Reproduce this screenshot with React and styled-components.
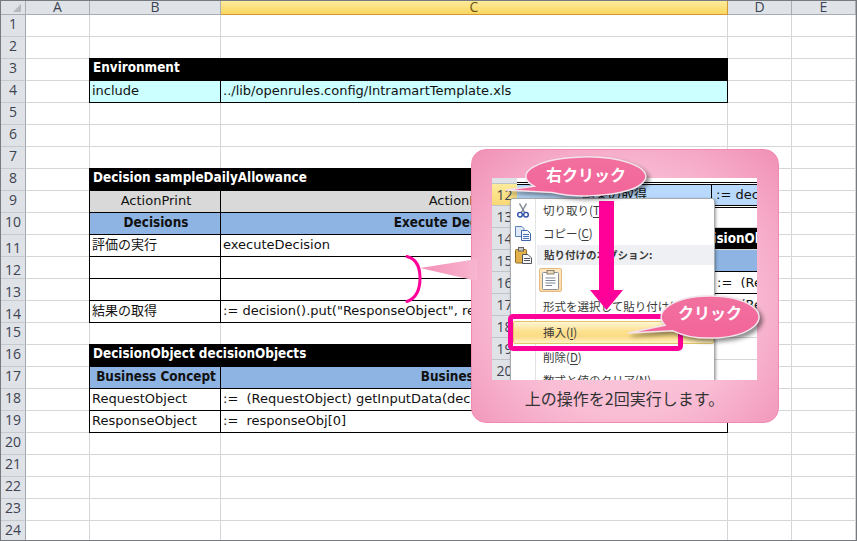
import React from "react";
import styled, { createGlobalStyle } from "styled-components";

const GlobalStyle = createGlobalStyle`
  html, body {
    margin: 0;
    padding: 0;
    background: #fff;
  }
`;

const CELL_FONT = `"DejaVu Sans", "Noto Sans CJK JP", sans-serif`;
const BOLD_FONT = `"DejaVu Sans Condensed", "DejaVu Sans", sans-serif`;
const UI_FONT = `"Open Sans", "Noto Sans CJK JP", sans-serif`;
const JP_FONT = `"Noto Sans CJK JP", "Open Sans", sans-serif`;
const PINK = "#ff0099";

const Page = styled.div`
  position: relative;
  box-sizing: border-box;
  width: 857px;
  height: 541px;
  overflow: hidden;
  border: 1px solid #777b80;
  background: #fff;
`;

const Sheet = styled.div`
  display: grid;
  grid-template-columns: 25px 64px 131px 507px 64px 64px;
  grid-template-rows: 14px repeat(24, 22px);
  font: 13px/1 ${CELL_FONT};
  color: #111;
`;

const Corner = styled.div`
  position: relative;
  background: #dfe2e7;
  border-right: 1px solid #a9adb3;
  border-bottom: 1px solid #a9adb3;

  &::after {
    content: "";
    position: absolute;
    right: 4px;
    bottom: 2px;
    border-style: solid;
    border-width: 0 0 8px 8px;
    border-color: transparent transparent #b5bac1 transparent;
  }
`;

const ColHead = styled.div`
  display: flex;
  align-items: center;
  justify-content: center;
  box-sizing: border-box;
  padding-bottom: 2px;
  font: 14px/1 ${UI_FONT};
  color: ${(p) => (p.$active ? "#6b5310" : "#3c4250")};
  background: ${(p) =>
    p.$active ? "linear-gradient(#fdeb9c, #f9d65f)" : "#dfe2e7"};
  border-right: 1px solid ${(p) => (p.$active ? "#d29a35" : "#a9adb3")};
  border-bottom: 1px solid ${(p) => (p.$active ? "#d29a35" : "#a9adb3")};
`;

const RowHead = styled.div`
  display: flex;
  align-items: center;
  justify-content: center;
  box-sizing: border-box;
  padding: ${(p) => (p.$low ? "4px 0 0" : "0 0 4px")};
  font: 14px/1 ${UI_FONT};
  color: #3c4250;
  background: #dfe2e7;
  border-right: 1px solid #a3a7ad;
  border-bottom: 1px solid #c6c9ce;
`;

const Blank = styled.div`
  box-sizing: border-box;
  border-right: 1px solid #d6d6d6;
  border-bottom: 1px solid #d6d6d6;
`;

const Title = styled.div`
  grid-column: span 2;
  display: flex;
  align-items: center;
  box-sizing: border-box;
  margin: -1px 0 0 -1px;
  padding: 0 0 3px 4px;
  font: bold 13.4px/1 ${BOLD_FONT};
  color: #fff;
  background: #000;
`;

const fills = { cyan: "#ccffff", grey: "#d9d9d9", blue: "#8db4e2", white: "#fff" };

const Cell = styled.div`
  display: flex;
  align-items: center;
  justify-content: ${(p) => (p.$center ? "center" : "flex-start")};
  box-sizing: border-box;
  margin-left: ${(p) => (p.$first ? "-1px" : "0")};
  padding: 0 0 2px 2px;
  white-space: pre;
  overflow: hidden;
  background: ${(p) => fills[p.$fill || "white"]};
  border-right: 1px solid #000;
  border-bottom: 1px solid #000;
  border-left: ${(p) => (p.$first ? "1px solid #000" : "0")};
`;

const HeadText = styled.span`
  font: bold 13.4px/1 ${BOLD_FONT};
  color: #111;
`;

const Callout = styled.div`
  position: absolute;
  left: 470px;
  top: 148px;
  box-sizing: border-box;
  width: 308px;
  height: 274px;
  padding: 28px 21px 0 20px;
  display: flex;
  flex-direction: column;
  border: 1px solid #f08ab0;
  border-radius: 15px;
  background: radial-gradient(ellipse at 50% 55%, #fcd0e1 0%, #f9bdd4 55%, #f190b5 100%);
`;

const Shot = styled.div`
  position: relative;
  z-index: 0;
  height: 202px;
  overflow: hidden;
  background: #fff;
  font: 13px/1 ${CELL_FONT};
  color: #111;
`;

const ShotRow = styled.div`
  display: grid;
  grid-template-columns: 25px 1fr;
  height: ${(p) => p.$h || 22}px;
`;

const ShotHead = styled.div`
  display: flex;
  align-items: center;
  justify-content: center;
  box-sizing: border-box;
  overflow: hidden;
  font: 14px/1 ${UI_FONT};
  color: #3c4250;
  background: ${(p) => (p.$active ? "linear-gradient(#fdeb9c, #f9d875)" : "#dfe2e7")};
  border-bottom: 1px solid #c0c3c8;
`;

const ShotBody = styled.div`
  display: flex;
  align-items: center;
  box-sizing: border-box;
  white-space: pre;
  overflow: hidden;
  padding-left: ${(p) => p.$pad || 0}px;
  border-bottom: 1px solid ${(p) => (p.$black ? "#000" : "#d6d6d6")};
  background: ${(p) => p.$bg || "#fff"};
  color: ${(p) => p.$color || "#111"};
  font: ${(p) => (p.$bold ? `bold 13.4px/1 ${BOLD_FONT}` : `13px/1 ${CELL_FONT}`)};
`;

const SelectedBody = styled.div`
  position: relative;
  z-index: 1;
  display: grid;
  grid-template-columns: 195px 1fr;
  align-items: center;
  box-sizing: border-box;
  white-space: pre;
  background: #b8d9fb;
  border-top: 1px solid #000;
  border-bottom: 1px solid #000;
  box-shadow: 0 -1px 0 #fff, 0 -2px 0 #000, 0 1px 0 #fff, 0 2px 0 #000;
`;

const SelectedText = styled.span`
  padding-left: ${(p) => p.$pad}px;
  height: 20px;
  line-height: 19px;
  border-right: ${(p) => (p.$divider ? "1px solid #000" : "0")};
`;

const Menu = styled.div`
  position: absolute;
  z-index: 2;
  left: 18px;
  top: 20px;
  box-sizing: border-box;
  width: 205px;
  height: 200px;
  border: 1px solid #a7abb0;
  border-radius: 3px;
  box-shadow: 1px 1px 3px rgba(0, 0, 0, 0.35);
  background: linear-gradient(to right, #fff 24px, #e2e3e3 24px, #e2e3e3 25px, #fff 25px);
  font: 11.5px/1 ${JP_FONT};
  color: #3b3b3b;
`;

const MenuItem = styled.div`
  display: flex;
  align-items: center;
  height: ${(p) => p.$h || 23}px;
  white-space: nowrap;
  overflow: hidden;
`;

const IconSlot = styled.span`
  display: flex;
  align-items: center;
  justify-content: center;
  flex: none;
  width: 24px;
  margin-right: ${(p) => p.$gap ?? 8}px;
`;

const MenuLabel = styled.span`
  u {
    text-underline-offset: 2px;
  }
`;

const MenuHeader = styled.div`
  flex: 1;
  display: flex;
  align-items: center;
  height: 100%;
  padding-left: 7px;
  background: #eff0f4;
  font-weight: bold;
  font-size: 10.5px;
`;

const PasteRow = styled.div`
  display: flex;
  align-items: center;
  height: 30px;
  padding-left: 28px;
`;

const PasteButton = styled.div`
  display: flex;
  align-items: center;
  justify-content: center;
  box-sizing: border-box;
  width: 23px;
  height: 24px;
  border: 1px solid #e5b981;
  border-radius: 2px;
  background: linear-gradient(#fde8c2, #fcd9a4);
`;

const HotItem = styled.div`
  display: flex;
  align-items: center;
  box-sizing: border-box;
  height: 23px;
  margin: 3px 0 2px 2px;
  padding-left: 29px;
  border: 1px solid #e3c56c;
  border-radius: 2px;
  background: linear-gradient(#fff6d4, #fde08c 45%, #fbdc88 70%, #fff3c6);
`;

const Frame = styled.div`
  position: absolute;
  z-index: 3;
  left: 16px;
  top: 136px;
  box-sizing: border-box;
  width: 175px;
  height: 37px;
  border: 5px solid ${PINK};
  border-radius: 5px;
`;

const Caption = styled.div`
  flex: 1;
  display: flex;
  align-items: center;
  justify-content: center;
  padding-bottom: 6px;
  font: 16px/1 ${JP_FONT};
  color: #333;
`;

const Drawing = styled.svg`
  position: absolute;
  left: ${(p) => p.$x}px;
  top: ${(p) => p.$y}px;
  overflow: visible;
  pointer-events: none;
`;

const BubbleShape = styled(Drawing)`
  filter: drop-shadow(3px 3px 2px rgba(0, 0, 0, 0.45));
`;

const BubbleText = styled.div`
  position: absolute;
  left: ${(p) => p.$x}px;
  top: ${(p) => p.$y}px;
  font: bold ${(p) => p.$size}px/1 ${JP_FONT};
  color: #fff;
  white-space: nowrap;
`;

const COLUMNS = ["A", "B", "C", "D", "E"];

// only the rows that hold a table, the rest are empty grid cells
const TABLE_ROWS = {
  3: { title: "Environment" },
  4: { b: "include", c: "../lib/openrules.config/IntramartTemplate.xls", fill: "cyan" },
  8: { title: "Decision sampleDailyAllowance" },
  9: { b: "ActionPrint", c: "ActionExecute", fill: "grey", center: true },
  10: { b: "Decisions", c: "Execute Decision Tables", fill: "blue", center: true, bold: true },
  11: { b: "評価の実行", c: "executeDecision" },
  12: { b: "", c: "" },
  13: { b: "", c: "" },
  14: { b: "結果の取得", c: ':= decision().put("ResponseObject", response)' },
  16: { title: "DecisionObject decisionObjects" },
  17: { b: "Business Concept", c: "Business Object", fill: "blue", center: true, bold: true },
  18: { b: "RequestObject", c: ":=  (RequestObject) getInputData(decision())" },
  19: { b: "ResponseObject", c: ":=  responseObj[0]" },
};

const LOW_LABELS = [11, 12, 13, 14];

const TableCells = ({ row }) => {
  if (row.title) return <Title>{row.title}</Title>;
  const Text = row.bold ? HeadText : "span";
  return (
    <>
      <Cell $first $fill={row.fill} $center={row.center}>
        <Text>{row.b}</Text>
      </Cell>
      <Cell $fill={row.fill} $center={row.center}>
        <Text>{row.c}</Text>
      </Cell>
    </>
  );
};

const SheetRow = ({ n }) => {
  const row = TABLE_ROWS[n];
  return (
    <>
      <RowHead $low={LOW_LABELS.includes(n)}>{n}</RowHead>
      <Blank />
      {row ? <TableCells row={row} /> : (
        <>
          <Blank />
          <Blank />
        </>
      )}
      <Blank />
      <Blank />
    </>
  );
};

const ScissorsIcon = () => (
  <svg width="12" height="15" viewBox="0 0 12 15">
    <path d="M2.5 0.5 L7.6 9.5 M9.5 0.5 L4.4 9.5" stroke="#7d8894" strokeWidth="1.5" fill="none" />
    <circle cx="3" cy="11.7" r="2.3" stroke="#2b4fa8" strokeWidth="1.4" fill="#fff" />
    <circle cx="9" cy="11.7" r="2.3" stroke="#2b4fa8" strokeWidth="1.4" fill="#fff" />
  </svg>
);

const CopyIcon = () => (
  <svg width="16" height="15" viewBox="0 0 16 15">
    <path d="M0.5 0.5 H7 L9 2.5 V10.5 H0.5 Z" fill="#dfe9f7" stroke="#5f82b8" />
    <path d="M6.5 4.5 H12.5 L15.5 7.5 V14.5 H6.5 Z" fill="#f3f7fd" stroke="#3f66a8" />
    <path d="M8 8.5 H14 M8 10.5 H14 M8 12.5 H14" stroke="#4a72b5" />
  </svg>
);

const ClipboardIcon = () => (
  <svg width="17" height="17" viewBox="0 0 17 17">
    <rect x="0.5" y="2.5" width="11" height="13.5" rx="1" fill="#e4b04a" stroke="#8c6a22" />
    <rect x="3.5" y="0.5" width="5" height="3.5" fill="#c8c9cb" stroke="#66625a" />
    <path d="M7.5 7.5 H13 L16.5 11 V16.5 H7.5 Z" fill="#f5f5f5" stroke="#50545c" />
    <path d="M9 11.5 H15 M9 13.5 H15" stroke="#50545c" />
  </svg>
);

const PasteIcon = () => (
  <svg width="17" height="20" viewBox="0 0 17 20">
    <rect x="0.5" y="2.5" width="16" height="17" rx="1" fill="#fff" stroke="#8b9097" />
    <rect x="5" y="0.5" width="7" height="3.5" fill="#e8d9b8" stroke="#8b8270" />
    <path d="M3.5 8 H13.5 M3.5 10.5 H13.5 M3.5 13 H13.5 M3.5 15.5 H10" stroke="#7b8797" />
  </svg>
);

const BubbleFill = ({ id }) => (
  <defs>
    <linearGradient id={id} x1="0" y1="0" x2="0" y2="1">
      <stop offset="0" stopColor="#f1709e" />
      <stop offset="1" stopColor="#f3659a" />
    </linearGradient>
  </defs>
);

const ShotSheet = () => (
  <>
    <ShotRow $h={6}>
      <ShotHead />
      <ShotBody />
    </ShotRow>
    <ShotRow>
      <ShotHead $active>12</ShotHead>
      <SelectedBody>
        <SelectedText $pad={65} $divider>結果の取得</SelectedText>
        <SelectedText $pad={4}>:= decision</SelectedText>
      </SelectedBody>
    </ShotRow>
    <ShotRow>
      <ShotHead>13</ShotHead>
      <ShotBody />
    </ShotRow>
    <ShotRow>
      <ShotHead>14</ShotHead>
      <ShotBody $bg="#000" $color="#fff" $bold $pad={170}>DecisionObject</ShotBody>
    </ShotRow>
    <ShotRow>
      <ShotHead>15</ShotHead>
      <ShotBody $bg="#8db4e2" $black />
    </ShotRow>
    <ShotRow>
      <ShotHead>16</ShotHead>
      <ShotBody $black $pad={200}>:=  (Request</ShotBody>
    </ShotRow>
    <ShotRow>
      <ShotHead>17</ShotHead>
      <ShotBody $black $pad={200}>:=  (Response</ShotBody>
    </ShotRow>
    <ShotRow>
      <ShotHead>18</ShotHead>
      <ShotBody />
    </ShotRow>
    <ShotRow>
      <ShotHead>19</ShotHead>
      <ShotBody />
    </ShotRow>
    <ShotRow>
      <ShotHead>20</ShotHead>
      <ShotBody />
    </ShotRow>
  </>
);

const ContextMenu = () => (
  <Menu>
    <MenuItem>
      <IconSlot><ScissorsIcon /></IconSlot>
      <MenuLabel>切り取り(<u>T</u>)</MenuLabel>
    </MenuItem>
    <MenuItem>
      <IconSlot><CopyIcon /></IconSlot>
      <MenuLabel>コピー(<u>C</u>)</MenuLabel>
    </MenuItem>
    <MenuItem $h={20}>
      <IconSlot $gap={2}><ClipboardIcon /></IconSlot>
      <MenuHeader>貼り付けのオプション:</MenuHeader>
    </MenuItem>
    <PasteRow>
      <PasteButton><PasteIcon /></PasteButton>
    </PasteRow>
    <MenuItem>
      <IconSlot />
      <MenuLabel>形式を選択して貼り付け(<u>S</u>)</MenuLabel>
    </MenuItem>
    <HotItem>
      <MenuLabel>挿入(<u>I</u>)</MenuLabel>
    </HotItem>
    <MenuItem>
      <IconSlot />
      <MenuLabel>削除(<u>D</u>)</MenuLabel>
    </MenuItem>
    <MenuItem>
      <IconSlot />
      <MenuLabel>数式と値のクリア(<u>N</u>)</MenuLabel>
    </MenuItem>
  </Menu>
);

const App = () => {
  const rows = Array.from({ length: 24 }, (_, i) => i + 1);
  return (
    <Page>
      <GlobalStyle />
      <Sheet>
        <Corner />
        {COLUMNS.map((c) => (
          <ColHead key={c} $active={c === "C"}>{c}</ColHead>
        ))}
        {rows.map((n) => (
          <SheetRow key={n} n={n} />
        ))}
      </Sheet>

      <Callout>
        {/* tail and bracket pointing at rows 12-13 */}
        <Drawing $x={-67} $y={100} width="72" height="60" viewBox="404 249 72 60">
          <defs>
            <linearGradient id="tailFill" x1="0" y1="0" x2="1" y2="0">
              <stop offset="0" stopColor="#f48fb6" />
              <stop offset="1" stopColor="#f8b6cf" />
            </linearGradient>
          </defs>
          <path d="M419 267 L476 258 V280 Z" fill="url(#tailFill)" />
          <path d="M406 255.5 C416 258 419 267 419 277 C419 287 416 297 406 300.5" fill="none" stroke={PINK} strokeWidth="3" strokeLinecap="round" />
        </Drawing>

        <Shot>
          <ShotSheet />
          <ContextMenu />
          <Frame />
        </Shot>
        <Caption>上の操作を2回実行します。</Caption>

        <Drawing $x={117} $y={51} width="36" height="110" viewBox="588 200 36 110">
          <path d="M598 200 H613 V289 H622 L605.5 309 L589 289 H598 Z" fill={PINK} />
        </Drawing>

        <BubbleShape $x={33} $y={5} width="147" height="44" viewBox="504 154 147 44">
          <BubbleFill id="bubbleA" />
          <path d="M533 185.2 L505 189 L551 191.5 A60 19.5 0 1 0 533 185.2 Z" fill="url(#bubbleA)" stroke="#f3e3ea" strokeWidth="1.5" />
        </BubbleShape>
        <BubbleText $x={74} $y={16} $size={16}>右クリック</BubbleText>

        <BubbleShape $x={155} $y={145} width="135" height="44" viewBox="626 294 135 44">
          <BubbleFill id="bubbleB" />
          <path d="M664 324.3 L627 332 L672 329.8 A49 21 0 1 0 664 324.3 Z" fill="url(#bubbleB)" stroke="#f3e3ea" strokeWidth="1.5" />
        </BubbleShape>
        <BubbleText $x={206} $y={154} $size={16}>クリック</BubbleText>
      </Callout>
    </Page>
  );
};

export default App;
